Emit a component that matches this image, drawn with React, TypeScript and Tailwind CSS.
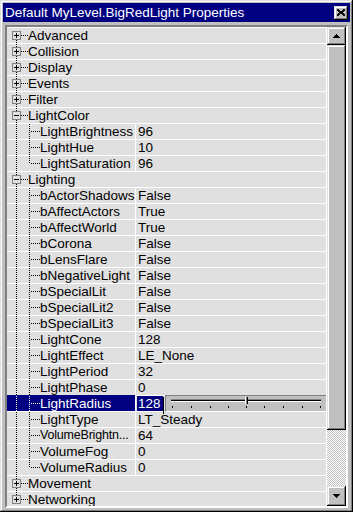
import React from "react";

type Row =
  | { kind: "cat"; name: string; expanded?: boolean }
  | { kind: "prop"; name: string; value: string; lastChild?: boolean; selected?: boolean; tight?: boolean };

const rows: Row[] = [
  { kind: "cat", name: "Advanced" },
  { kind: "cat", name: "Collision" },
  { kind: "cat", name: "Display" },
  { kind: "cat", name: "Events" },
  { kind: "cat", name: "Filter" },
  { kind: "cat", name: "LightColor", expanded: true },
  { kind: "prop", name: "LightBrightness", value: "96" },
  { kind: "prop", name: "LightHue", value: "10" },
  { kind: "prop", name: "LightSaturation", value: "96", lastChild: true },
  { kind: "cat", name: "Lighting", expanded: true },
  { kind: "prop", name: "bActorShadows", value: "False" },
  { kind: "prop", name: "bAffectActors", value: "True" },
  { kind: "prop", name: "bAffectWorld", value: "True" },
  { kind: "prop", name: "bCorona", value: "False" },
  { kind: "prop", name: "bLensFlare", value: "False" },
  { kind: "prop", name: "bNegativeLight", value: "False" },
  { kind: "prop", name: "bSpecialLit", value: "False" },
  { kind: "prop", name: "bSpecialLit2", value: "False" },
  { kind: "prop", name: "bSpecialLit3", value: "False" },
  { kind: "prop", name: "LightCone", value: "128" },
  { kind: "prop", name: "LightEffect", value: "LE_None" },
  { kind: "prop", name: "LightPeriod", value: "32" },
  { kind: "prop", name: "LightPhase", value: "0" },
  { kind: "prop", name: "LightRadius", value: "128", selected: true },
  { kind: "prop", name: "LightType", value: "LT_Steady" },
  { kind: "prop", name: "VolumeBrightn...", value: "64", tight: true },
  { kind: "prop", name: "VolumeFog", value: "0" },
  { kind: "prop", name: "VolumeRadius", value: "0", lastChild: true },
  { kind: "cat", name: "Movement" },
  { kind: "cat", name: "Networking" },
];

function vdots(x: number, y0: number, y1: number, color: string, key: string) {
  const out: React.ReactElement[] = [];
  for (let y = y0; y <= y1; y++) {
    if (y % 2 === 0) out.push(<rect key={key + y} x={x} y={y} width={1} height={1} fill={color} />);
  }
  return out;
}

function hdots(y: number, x0: number, x1: number, color: string, key: string) {
  const out: React.ReactElement[] = [];
  for (let x = x0; x <= x1; x++) {
    if (x % 2 === 0) out.push(<rect key={key + x} x={x} y={y} width={1} height={1} fill={color} />);
  }
  return out;
}

function CatGutter({ expanded, first, last }: { expanded?: boolean; first: boolean; last: boolean }) {
  const c = "#000";
  return (
    <svg width={21} height={15} className="shrink-0" shapeRendering="crispEdges">
      {!first && vdots(9, 0, 2, c, "a")}
      {!last && vdots(9, 12, 14, c, "b")}
      <rect x={5.5} y={3.5} width={8} height={8} fill="none" stroke="#808080" />
      <rect x={7} y={7} width={5} height={1} fill="#000" />
      {!expanded && <rect x={9} y={5} width={1} height={5} fill="#000" />}
      {hdots(7, 14, 20, c, "h")}
    </svg>
  );
}

function PropGutter({ lastChild, selected }: { lastChild?: boolean; selected?: boolean }) {
  const c = selected ? "#ffffff" : "#000";
  return (
    <svg width={33} height={15} className="shrink-0" shapeRendering="crispEdges">
      {vdots(9, 0, 14, c, "r")}
      {vdots(22, 0, lastChild ? 7 : 14, c, "c")}
      {hdots(7, 24, 32, c, "h")}
    </svg>
  );
}

function Slider() {
  const ticks = [6, 25, 44, 62, 80, 98, 117, 136, 154];
  return (
    <div className="relative z-10 ml-[2px] mt-[-1px] h-[17px] w-[162px] border border-t-[#808080] border-l-[#808080] border-r-white border-b-white bg-[#c0c0c0]">
      <svg width={160} height={15} shapeRendering="crispEdges">
        <rect x={5} y={3} width={150} height={1} fill="#808080" />
        <rect x={5} y={4} width={150} height={1} fill="#000" />
        <rect x={5} y={5} width={150} height={1} fill="#fff" />
        <rect x={79} y={1} width={1} height={7} fill="#fff" />
        <rect x={80} y={1} width={1} height={7} fill="#808080" />
        <rect x={81} y={1} width={1} height={7} fill="#000" />
        {ticks.map((t) => (
          <rect key={t} x={t} y={10} width={1} height={2} fill="#000" />
        ))}
      </svg>
    </div>
  );
}

const bevelOut =
  "shadow-[inset_-1px_-1px_0_#000,inset_1px_1px_0_#dfdfdf,inset_-2px_-2px_0_#808080,inset_2px_2px_0_#fff]";

function Arrow({ up }: { up: boolean }) {
  return (
    <svg width={7} height={4} shapeRendering="crispEdges">
      {up ? (
        <>
          <rect x={3} y={0} width={1} height={1} fill="#000" />
          <rect x={2} y={1} width={3} height={1} fill="#000" />
          <rect x={1} y={2} width={5} height={1} fill="#000" />
          <rect x={0} y={3} width={7} height={1} fill="#000" />
        </>
      ) : (
        <>
          <rect x={0} y={0} width={7} height={1} fill="#000" />
          <rect x={1} y={1} width={5} height={1} fill="#000" />
          <rect x={2} y={2} width={3} height={1} fill="#000" />
          <rect x={3} y={3} width={1} height={1} fill="#000" />
        </>
      )}
    </svg>
  );
}

export default function App() {
  return (
    <div
      className={`flex h-[512px] w-[353px] flex-col overflow-hidden bg-[#c0c0c0] px-[3px] pt-[3px] pb-[4px] ${bevelOut}`}
      style={{ fontFamily: '"Liberation Sans", Arial, sans-serif' }}
    >
      {/* Title bar */}
      <div className="flex h-[19px] shrink-0 items-center justify-between bg-[#000080] pl-[2px] pr-[2px]">
        <span className="text-[13.5px] leading-[19px] text-white">Default MyLevel.BigRedLight Properties</span>
        <div className={`flex h-[14px] w-[14px] items-center justify-center bg-[#c0c0c0] ${bevelOut}`}>
          <svg width={8} height={7} shapeRendering="crispEdges">
            <path d="M0 0 L8 7 M1 0 L8 6 M0 1 L7 7 M8 0 L0 7 M7 0 L0 6 M8 1 L1 7" stroke="#000" strokeWidth={0.9} />
          </svg>
        </div>
      </div>

      {/* Panel */}
      <div className="mx-[2px] mt-[3px] flex h-[483px] shrink-0 border-2 border-t-[#808080] border-l-[#808080] border-r-white border-b-white shadow-[inset_1px_1px_0_#000,inset_-1px_-1px_0_#dfdfdf]">
        <div className="flex h-[479px] w-[320px] flex-col overflow-hidden border-r border-white bg-[#e0e0e0] text-[13.5px] leading-[15px] text-black">
          {rows.map((r, i) => {
            if (r.kind === "cat") {
              return (
                <div key={i} className="flex h-[16px] shrink-0 items-center border-t border-white">
                  <CatGutter expanded={r.expanded} first={i === 0} last={i === rows.length - 1} />
                  <span className="whitespace-nowrap">{r.name}</span>
                </div>
              );
            }
            return (
              <div key={i} className="flex h-[16px] shrink-0">
                <div
                  className={`flex h-[16px] w-[128px] shrink-0 items-center overflow-hidden border-t ${
                    r.selected ? "border-[#000080] bg-[#000080] text-white" : "border-white"
                  }`}
                >
                  <PropGutter lastChild={r.lastChild} selected={r.selected} />
                  <span className={`whitespace-nowrap ${r.tight ? "text-[12.5px] tracking-[-0.2px]" : ""}`}>{r.name}</span>
                </div>
                <div className="w-px shrink-0 bg-white" />
                {r.selected ? (
                  <div className="flex flex-1 items-center border-t border-white">
                    <div className="relative ml-[1px] flex h-[15px] items-center">
                      <span className="bg-[#000080] pl-[1px] pr-[2px] leading-[15px] text-white">{r.value}</span>
                      <span className="absolute right-[-1px] top-[1px] h-[17px] w-px bg-black" />
                    </div>
                    <Slider />
                  </div>
                ) : (
                  <div className="flex flex-1 items-center border-t border-white pl-[2px]">
                    <span className="whitespace-nowrap">{r.value}</span>
                  </div>
                )}
              </div>
            );
          })}
        </div>

        {/* Scrollbar */}
        <div className="flex w-[19px] flex-col">
          <div className={`flex h-[18px] shrink-0 items-center justify-center bg-[#c0c0c0] ${bevelOut}`}>
            <Arrow up />
          </div>
          <div className={`h-[385px] shrink-0 bg-[#c0c0c0] ${bevelOut}`} />
          <div className="min-h-0 flex-1 overflow-hidden">
            <svg width={19} height={56} shapeRendering="crispEdges" className="block">
              <defs>
                <pattern id="dither" width={2} height={2} patternUnits="userSpaceOnUse">
                  <rect width={2} height={2} fill="#c0c0c0" />
                  <rect x={0} y={0} width={1} height={1} fill="#fff" />
                  <rect x={1} y={1} width={1} height={1} fill="#fff" />
                </pattern>
              </defs>
              <rect width={19} height={56} fill="url(#dither)" />
            </svg>
          </div>
          <div className={`flex h-[20px] shrink-0 items-center justify-center bg-[#c0c0c0] ${bevelOut}`}>
            <Arrow up={false} />
          </div>
        </div>
      </div>
    </div>
  );
}
